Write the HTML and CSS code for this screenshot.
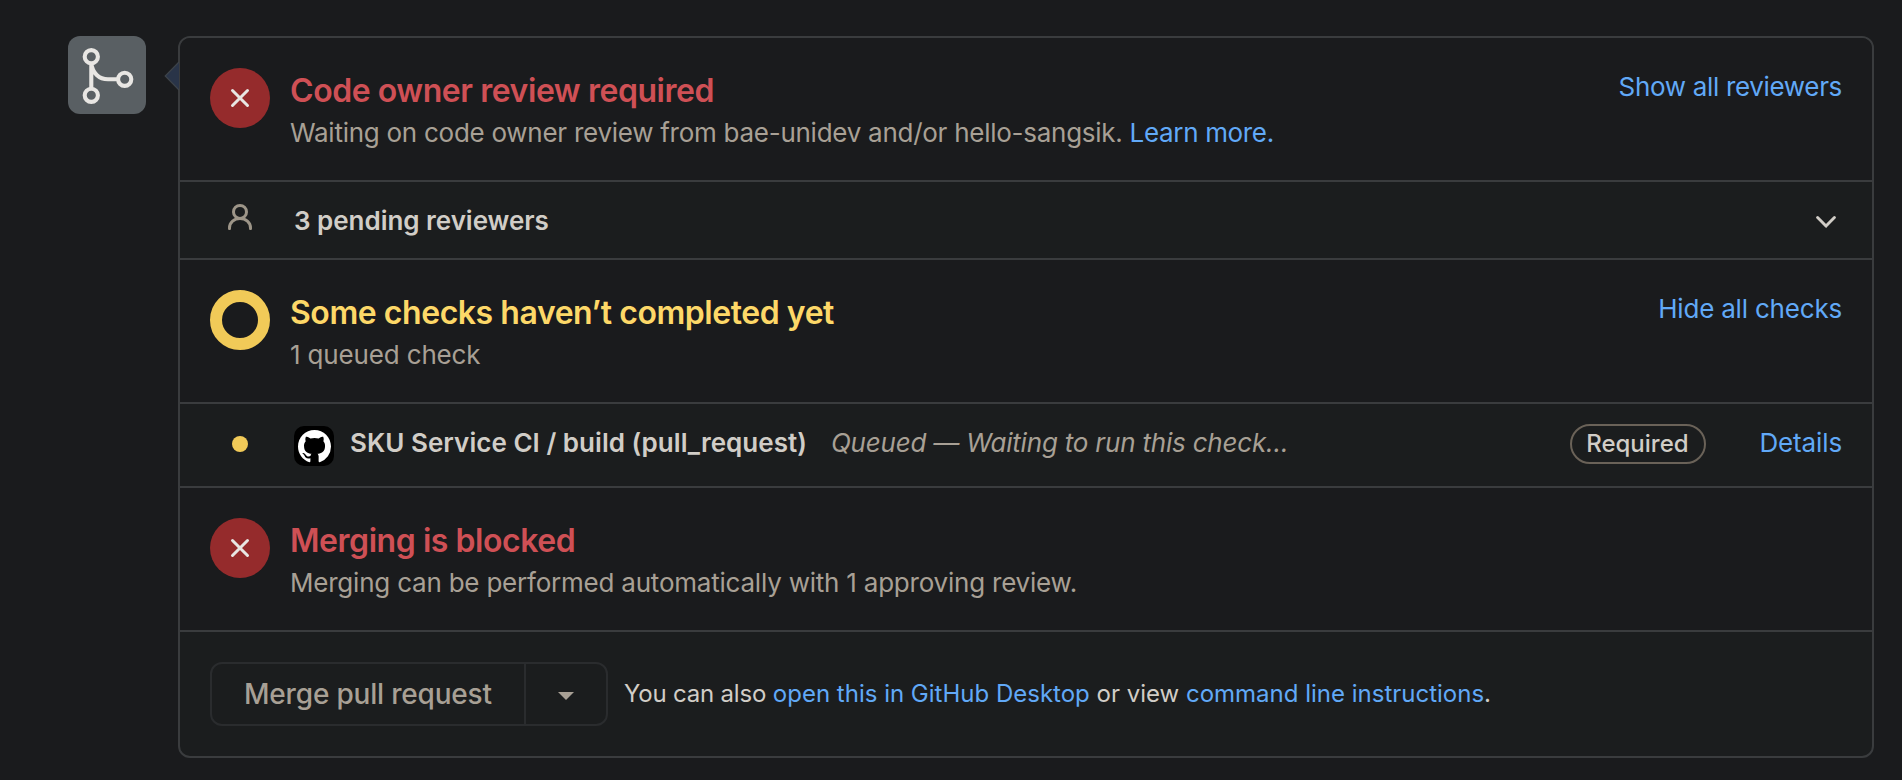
FILE: index.html
```html
<!DOCTYPE html>
<html lang="en">
<head>
<meta charset="utf-8">
<title>Merge status</title>
<link rel="stylesheet" href="styles.css">
</head>
<body>
<main class="page">
  <div class="avatar">
    <svg width="78" height="78" viewBox="0 0 78 78" fill="none" stroke="#e8e6e3" stroke-width="4.1">
      <circle cx="23.3" cy="20.7" r="6.6"/>
      <circle cx="23.3" cy="59.3" r="6.6"/>
      <circle cx="56.7" cy="43.3" r="6.6"/>
      <path d="M23.3 27.5V52.5M23.3 27.5C24.5 37 31 43.3 40 43.3H50"/>
    </svg>
  </div>

  <div class="box">
    <svg class="box-arrow" width="16" height="32" viewBox="0 0 16 32">
      <path d="M15 2L1.2 16L15 30Z" fill="#293448"/>
      <path d="M15 2L1.2 16L15 30" fill="none" stroke="#3d4349" stroke-width="1.2"/>
    </svg>

    <section class="status">
      <div class="status-icon blocked">
        <svg width="20" height="20" viewBox="0 0 20 20" fill="none" stroke="#e8e6e3" stroke-width="3" stroke-linecap="round"><path d="M2.5 2.5L17.5 17.5M17.5 2.5L2.5 17.5"/></svg>
      </div>
      <div class="status-body">
        <h3 class="title red">Code owner review required</h3>
        <p class="sub sub-wide">Waiting on code owner review from bae-unidev and/or hello-sangsik. <a class="link">Learn more.</a></p>
      </div>
      <a class="link toggle toggle-reviewers">Show all reviewers</a>
    </section>

    <section class="row reviewers">
      <svg class="person" width="28" height="28" viewBox="0 0 28 28" fill="none" stroke="#9d9588" stroke-width="3">
        <circle cx="14" cy="9.9" r="6.5"/>
        <path d="M3.5 26.6V26C3.5 20.4 8.2 16.6 14 16.6S24.5 20.4 24.5 26V26.6" stroke-linecap="round"/>
      </svg>
      <strong class="reviewer-count">3 pending reviewers</strong>
      <svg class="chevron" width="20" height="12" viewBox="0 0 20 12" fill="none" stroke="#d1cdc7" stroke-width="2.9" stroke-linecap="round" stroke-linejoin="round"><path d="M1.6 1.6L10 10.1L18.4 1.6"/></svg>
    </section>

    <section class="status">
      <div class="status-icon pending"></div>
      <div class="status-body">
        <h3 class="title yellow">Some checks haven’t completed yet</h3>
        <p class="sub">1 queued check</p>
      </div>
      <a class="link toggle">Hide all checks</a>
    </section>

    <section class="row check">
      <span class="dot"></span>
      <span class="app-logo">
        <svg width="33" height="33" viewBox="0 0 16 16" fill="#fff"><path d="M8 0C3.58 0 0 3.58 0 8c0 3.54 2.29 6.53 5.47 7.59.4.07.55-.17.55-.38 0-.19-.01-.82-.01-1.49-2.01.37-2.53-.49-2.69-.94-.09-.23-.48-.94-.82-1.13-.28-.15-.68-.52-.01-.53.63-.01 1.08.58 1.23.82.72 1.21 1.87.87 2.33.66.07-.52.28-.87.51-1.07-1.78-.2-3.64-.89-3.64-3.95 0-.87.31-1.59.82-2.15-.08-.2-.36-1.02.08-2.12 0 0 .67-.21 2.2.82.64-.18 1.32-.27 2-.27.68 0 1.36.09 2 .27 1.53-1.04 2.2-.82 2.2-.82.44 1.1.16 1.92.08 2.12.51.56.82 1.27.82 2.15 0 3.07-1.87 3.75-3.65 3.95.29.25.54.73.54 1.48 0 1.07-.01 1.93-.01 2.2 0 .21.15.46.55.38A8.013 8.013 0 0016 8c0-4.42-3.58-8-8-8z"/></svg>
      </span>
      <strong class="check-name">SKU Service CI / build (pull_request)</strong>
      <em class="check-state">Queued — Waiting to run this check…</em>
      <span class="label">Required</span>
      <a class="link details">Details</a>
    </section>

    <section class="status">
      <div class="status-icon blocked">
        <svg width="20" height="20" viewBox="0 0 20 20" fill="none" stroke="#e8e6e3" stroke-width="3" stroke-linecap="round"><path d="M2.5 2.5L17.5 17.5M17.5 2.5L2.5 17.5"/></svg>
      </div>
      <div class="status-body">
        <h3 class="title red">Merging is blocked</h3>
        <p class="sub sub-merge">Merging can be performed automatically with 1 approving review.</p>
      </div>
    </section>

    <section class="row actions">
      <div class="button-group">
        <span class="button-main">Merge pull request</span>
        <span class="button-caret"><svg width="16" height="8" viewBox="0 0 16 8" fill="#a8a095"><path d="M0 0H16L8 8Z"/></svg></span>
      </div>
      <p class="hint"><span class="hint-lead">You can also</span> <a class="link">open this in GitHub Desktop</a> or view <a class="link">command line instructions</a>.</p>
    </section>
  </div>
</main>
</body>
</html>
```

FILE: styles.css
```css
* { box-sizing: border-box; }

body {
  margin: 0;
  background: #1a1b1d;
  color: #d1cdc7;
  font-family: Inter, "Liberation Sans", sans-serif;
  font-size: 26px;
  line-height: 39px;
}

h3, p { margin: 0; }

.page {
  display: flex;
  align-items: flex-start;
  gap: 32px;
  height: 780px;
  padding: 36px 28px 0 68px;
  overflow: hidden;
}

.avatar {
  flex: none;
  width: 78px;
  height: 78px;
  border-radius: 12px;
  background: #595f63;
}
.avatar svg { display: block; }

.box {
  position: relative;
  flex: 1;
  height: 722px;
  border: 2px solid #3a3c3e;
  border-radius: 12px;
  background: #1b1d1e;
}
.box-arrow { position: absolute; left: -16px; top: 22px; }

.status {
  display: flex;
  height: 142px;
  padding: 30px 30px 0;
  background: #1a1b1d;
}
.status:nth-of-type(1) { border-radius: 10px 10px 0 0; }
.status-icon {
  display: flex;
  flex: none;
  align-items: center;
  justify-content: center;
  width: 60px;
  height: 60px;
  border-radius: 50%;
}
.blocked { background: #952b2c; }
.pending { border: 12px solid #f1ca58; }
.status-body { flex: 1; margin: 3px 0 0 20px; }

section + section { border-top: 2px solid #3a3c3e; }
.status + .row { height: 78px; }
.row + .status, .status + .status { height: 144px; }

.title {
  font-size: 32px;
  font-weight: 600;
  line-height: 40px;
  letter-spacing: -0.45px;
}
.red { color: #cf5055; }
.yellow { color: #fdd868; }

.sub {
  margin-top: 2px;
  color: #a8a095;
  letter-spacing: -0.157px;
}
.sub-wide { letter-spacing: -0.265px; }
.sub-merge { letter-spacing: -0.216px; }
.sub-wide .link { letter-spacing: -0.34px; }

.link { color: #61a9f7; }
.toggle { margin-top: -1px; letter-spacing: -0.195px; }
.toggle-reviewers { letter-spacing: -0.331px; }

.row { display: flex; align-items: center; }

.reviewers { padding: 0 36px 0 46px; }
.person { margin-bottom: 8px; }
.reviewer-count {
  flex: 1;
  margin-left: 40px;
  font-weight: 600;
  letter-spacing: -0.03px;
}
.chevron { margin-top: 4px; }

.status + .check { height: 84px; padding: 0 30px 6px 52px; }
.dot {
  width: 16px;
  height: 16px;
  margin-top: 4px;
  border-radius: 50%;
  background: #f1ca58;
}
.app-logo {
  display: flex;
  align-items: center;
  justify-content: center;
  width: 40px;
  height: 40px;
  margin: 8px 16px 0 46px;
  border-radius: 10px;
  background: #000;
}
.check-name { font-weight: 600; letter-spacing: 0.03px; }
.check-state {
  flex: 1;
  margin-left: 24px;
  color: #a8a095;
  letter-spacing: -0.2px;
}
.label {
  width: 136px;
  height: 40px;
  margin-top: 4px;
  padding-right: 2px;
  border: 2px solid #6a6258;
  border-radius: 20px;
  font-size: 24px;
  font-weight: 500;
  line-height: 35px;
  text-align: center;
}
.details { margin-left: 53px; letter-spacing: -0.125px; }

.status + .actions { height: 126px; padding: 0 30px; }
.button-group {
  display: flex;
  width: 398px;
  height: 64px;
  border: 2px solid #2a2c2e;
  border-radius: 12px;
  color: #a8a095;
  font-size: 28px;
  font-weight: 500;
  line-height: 60px;
}
.button-main {
  width: 312px;
  padding-left: 32px;
  letter-spacing: -0.189px;
}
.button-caret {
  display: flex;
  flex: 1;
  align-items: center;
  padding: 4px 0 0 32px;
  border-left: 2px solid #2a2c2e;
}
.hint {
  margin-left: 16px;
  font-size: 24px;
  line-height: 36px;
  white-space: nowrap;
}
.hint-lead { letter-spacing: -0.2px; }
```
